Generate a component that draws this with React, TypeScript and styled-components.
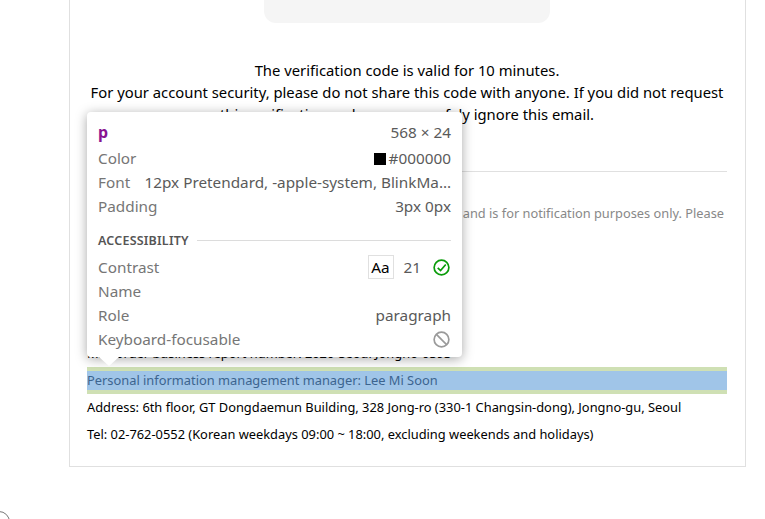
import React from "react"
import styled, { createGlobalStyle } from "styled-components"

const GlobalStyle = createGlobalStyle`
  html, body {
    margin: 0;
    padding: 0;
    background: #fff;
    overflow: hidden;
  }
  body {
    font-family: "Noto Sans", "Open Sans", sans-serif;
    color: #000;
  }
`

const Page = styled.div`
  position: relative;
  width: 765px;
  height: 519px;
  overflow: hidden;
`

const Card = styled.main`
  position: relative;
  box-sizing: border-box;
  width: 677px;
  height: 467px;
  margin-left: 69px;
  padding: 0 18px 0 17px;
  border: 1px solid #e0e0e0;
  border-top: none;
`

const CodeBox = styled.div`
  width: 286px;
  height: 23px;
  margin: 0 auto;
  background: #f5f5f5;
  border-radius: 0 0 12px 12px;
`

const Notice = styled.div`
  margin-top: 36px;
  font-size: 14.8px;
  line-height: 22px;
  text-align: center;
  white-space: nowrap;
`

const Divider = styled.hr`
  margin: 46px 0 0;
  border: none;
  border-top: 1px solid #e0e0e0;
`

const MutedLine = styled.p`
  margin: 33px 0 0;
  padding-right: 3px;
  font-size: 12.8px;
  line-height: 16px;
  color: #888;
  text-align: right;
  white-space: nowrap;
`

const Footer = styled.div`
  margin-top: 119px;
`

const FooterLine = styled.p<{ $inspected?: boolean }>`
  margin: 0;
  height: 19px;
  padding: 4px 0;
  font-size: 12.85px;
  line-height: 19px;
  white-space: nowrap;
  background: ${({ $inspected }) =>
    $inspected
      ? "linear-gradient(#a0c5e8, #a0c5e8) content-box, #cfe0b4"
      : "transparent"};
  color: ${({ $inspected }) => ($inspected ? "#3c648f" : "#000")};
`

const Tooltip = styled.aside`
  position: absolute;
  left: 87px;
  top: 112px;
  box-sizing: border-box;
  width: 375px;
  height: 245px;
  padding: 8px 11px 0;
  background: #fff;
  border-radius: 4px;
  box-shadow: 0 2px 12px rgba(0, 0, 0, 0.35);
  font-size: 15.3px;
  color: #5a5a5a;

  &::after {
    content: "";
    position: absolute;
    left: 12px;
    bottom: -9px;
    border-left: 10px solid transparent;
    border-right: 10px solid transparent;
    border-top: 9px solid #fff;
  }
`

const Row = styled.div`
  display: flex;
  align-items: center;
  justify-content: space-between;
  height: 24px;
  white-space: nowrap;
`

const HeaderRow = styled(Row)`
  margin-bottom: 2px;
`

const Label = styled.span`
  color: #767676;
`

const TagName = styled.span`
  color: #881391;
  font-size: 16px;
  font-weight: 700;
`

const Swatch = styled.span`
  display: inline-block;
  width: 12px;
  height: 12px;
  margin-right: 3px;
  background: #000;
  vertical-align: -1px;
`

const SectionHead = styled.div`
  display: flex;
  align-items: center;
  gap: 8px;
  margin-top: 10px;
  margin-bottom: 3px;
  height: 24px;
  font-size: 12.5px;
  font-weight: 600;
  letter-spacing: 0.2px;
  color: #555;

  &::after {
    content: "";
    flex: 1;
    border-top: 1px solid #dcdcdc;
  }
`

const ContrastValue = styled.span`
  display: flex;
  align-items: center;
`

const AaChip = styled.span`
  display: flex;
  align-items: center;
  justify-content: center;
  width: 24px;
  height: 22px;
  border: 1px solid #e0e0e0;
  color: #000;
`

const Ratio = styled.span`
  margin: 0 12px 0 10px;
`

const StatusIcon = styled.svg`
  width: 17px;
  height: 17px;
  margin-right: 1px;
  fill: none;
  stroke-width: 1.8;
`

const CornerArc = styled.div`
  position: absolute;
  left: -12px;
  top: 511px;
  width: 20px;
  height: 20px;
  border: 1px solid #777;
  border-radius: 50%;
`

export default function App() {
  return (
    <Page>
      <GlobalStyle />
      <Card>
        <CodeBox />
        <Notice>
          The verification code is valid for 10 minutes.
          <br />
          For your account security, please do not share this code with anyone. If you did not request
          <br />
          this verification code, you can safely ignore this email.
        </Notice>
        <Divider />
        <MutedLine>This email is sent from a send-only address and is for notification purposes only. Please</MutedLine>
        <Footer>
          <FooterLine>Mail order business report number: 2020-Seoul Jongno-0393</FooterLine>
          <FooterLine $inspected>Personal information management manager: Lee Mi Soon</FooterLine>
          <FooterLine>Address: 6th floor, GT Dongdaemun Building, 328 Jong-ro (330-1 Changsin-dong), Jongno-gu, Seoul</FooterLine>
          <FooterLine>Tel: 02-762-0552 (Korean weekdays 09:00 ~ 18:00, excluding weekends and holidays)</FooterLine>
        </Footer>
      </Card>
      <Tooltip>
        <HeaderRow>
          <TagName>p</TagName>
          <span>568 × 24</span>
        </HeaderRow>
        <Row>
          <Label>Color</Label>
          <span>
            <Swatch />#000000
          </span>
        </Row>
        <Row>
          <Label>Font</Label>
          <span>12px Pretendard, -apple-system, BlinkMa…</span>
        </Row>
        <Row>
          <Label>Padding</Label>
          <span>3px 0px</span>
        </Row>
        <SectionHead>ACCESSIBILITY</SectionHead>
        <Row>
          <Label>Contrast</Label>
          <ContrastValue>
            <AaChip>Aa</AaChip>
            <Ratio>21</Ratio>
            <StatusIcon viewBox="0 0 18 18" stroke="#0a9c0a">
              <circle cx="9" cy="9" r="7.8" />
              <path d="M5 9.3l3 3 5.5-6.5" />
            </StatusIcon>
          </ContrastValue>
        </Row>
        <Row>
          <Label>Name</Label>
        </Row>
        <Row>
          <Label>Role</Label>
          <span>paragraph</span>
        </Row>
        <Row>
          <Label>Keyboard-focusable</Label>
          <StatusIcon viewBox="0 0 18 18" stroke="#9a9a9a">
            <circle cx="9" cy="9" r="7.8" />
            <path d="M3.6 3.6l10.8 10.8" />
          </StatusIcon>
        </Row>
      </Tooltip>
      <CornerArc />
    </Page>
  )
}
